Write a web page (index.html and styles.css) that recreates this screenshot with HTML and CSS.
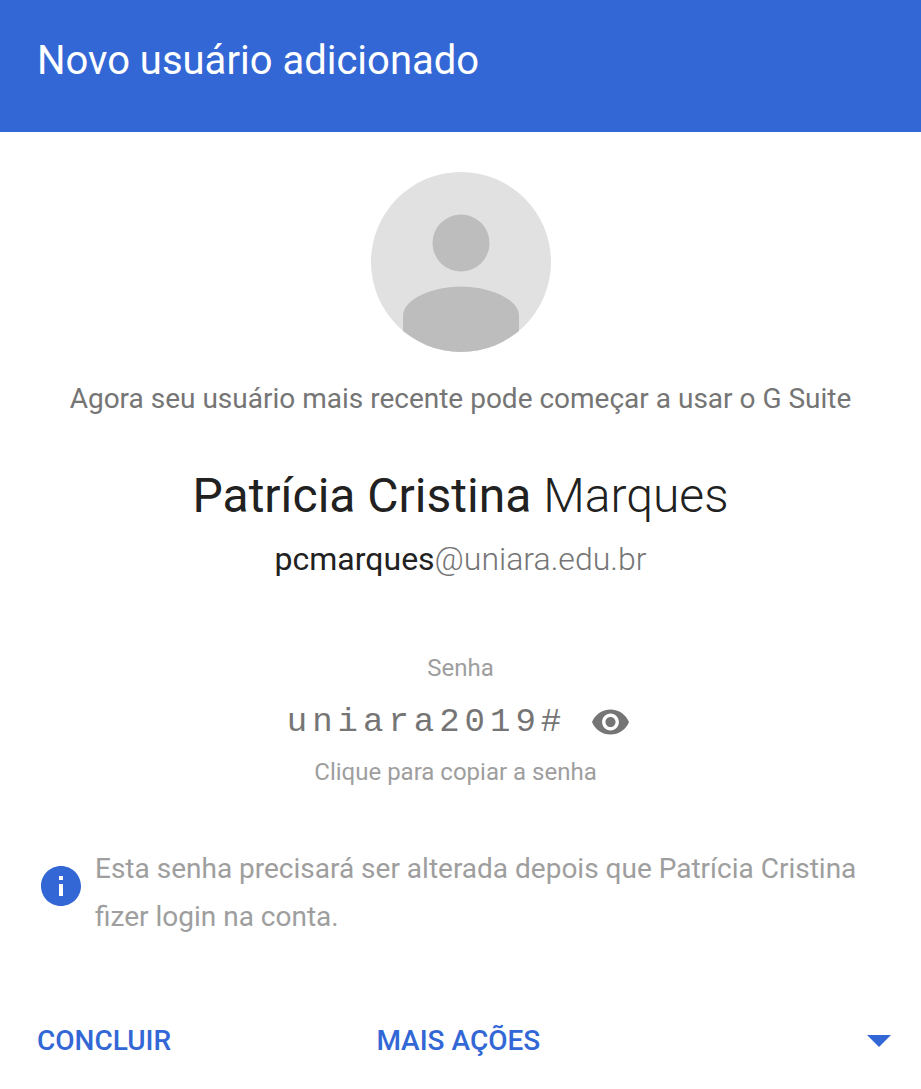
FILE: index.html
```html
<!DOCTYPE html>
<html lang="pt-BR">
<head>
<meta charset="utf-8">
<meta name="viewport" content="width=device-width, initial-scale=1">
<title>Novo usuário adicionado</title>
<link rel="stylesheet" href="styles.css">
</head>
<body>
<header class="header"><h1 class="title">Novo usuário adicionado</h1></header>
<main class="content">
  <svg class="avatar" viewBox="0 0 180 180" role="img" aria-label="Foto do perfil">
    <defs><clipPath id="circle"><circle cx="90" cy="90" r="90"/></clipPath></defs>
    <circle cx="90" cy="90" r="90" fill="#e1e1e1"/>
    <g clip-path="url(#circle)" fill="#bdbdbd">
      <circle cx="90" cy="71" r="28.500"/>
      <path d="M32 180V144C32 126 64 114.500 90 114.500S148 126 148 144V180Z"/>
    </g>
  </svg>
  <p class="intro">Agora seu usuário mais recente pode começar a usar o G Suite</p>
  <h2 class="name">Patrícia Cristina <span class="light">Marques</span></h2>
  <p class="email">pcmarques<span class="domain">@uniara.edu.br</span></p>
  <section class="password">
    <p class="caption">Senha</p>
    <div class="secret">
      <span class="value">uniara2019#</span>
      <button class="eye" type="button" aria-label="Ocultar senha">
        <svg class="eye-icon" viewBox="1 4.500 22 15"><path fill="#757575" d="M12 4.500C7 4.500 2.730 7.610 1 12c1.730 4.390 6 7.500 11 7.500s9.270-3.110 11-7.500c-1.730-4.390-6-7.500-11-7.500zM12 17c-2.760 0-5-2.240-5-5s2.240-5 5-5 5 2.240 5 5-2.240 5-5 5zm0-8c-1.660 0-3 1.340-3 3s1.340 3 3 3 3-1.340 3-3-1.340-3-3-3z"/></svg>
      </button>
    </div>
    <button class="copy" type="button">Clique para copiar a senha</button>
  </section>
  <div class="notice">
    <svg class="info" viewBox="2 2 20 20" aria-hidden="true"><path fill="#3367d6" d="M12 2C6.480 2 2 6.480 2 12s4.480 10 10 10 10-4.480 10-10S17.520 2 12 2zm1 15h-2v-6h2v6zm0-8h-2V7h2v2z"/></svg>
    <p class="notice-text">Esta senha precisará ser alterada depois que Patrícia Cristina fizer login na conta.</p>
  </div>
</main>
<footer class="actions">
  <button class="action" type="button">CONCLUIR</button>
  <button class="action more" type="button"><span>MAIS AÇÕES</span><svg class="arrow" viewBox="0 0 24 12" aria-hidden="true"><path fill="#3367d6" d="M0 0h24L12 12z"/></svg></button>
</footer>
</body>
</html>
```
FILE: styles.css
```css
* {
  box-sizing: border-box;
}

body {
  margin: 0;
  background: #fff;
  font-family: Roboto, sans-serif;
  color: #212121;
}

h1, h2, p {
  margin: 0;
  font-weight: 400;
}

button {
  padding: 0;
  border: 0;
  background: none;
  font: inherit;
  cursor: pointer;
}

.header {
  padding: 37px 37px 47px;
  background: #3367d6;
  color: #fff;
}

.title {
  font-size: 40px;
  line-height: 48px;
}

.content {
  display: flex;
  flex-direction: column;
  align-items: center;
  padding: 40px 38px 0;
}

.avatar {
  width: 180px;
  height: 180px;
}

.intro {
  margin-top: 31px;
  color: #757575;
  font-size: 28px;
  line-height: 32px;
}

.name {
  margin-top: 53px;
  font-size: 48px;
  line-height: 56px;
}

.light {
  font-weight: 300;
}

.email {
  margin-top: 15px;
  font-size: 32px;
  line-height: 40px;
}

.domain {
  color: #757575;
  font-weight: 300;
}

.password {
  display: flex;
  flex-direction: column;
  align-items: center;
  margin-top: 73px;
}

.caption, .copy {
  color: #9e9e9e;
  font-size: 24px;
  line-height: 32px;
}

.copy {
  padding-right: 10px;
}

.secret {
  display: flex;
  align-items: center;
  gap: 26px;
  height: 40px;
  margin: 18px 0 14px;
  padding-right: 5px;
}

.value {
  color: #757575;
  font-family: "Liberation Mono", monospace;
  font-size: 34px;
  letter-spacing: 5px;
}

.eye, .eye-icon {
  display: block;
  width: 37px;
  height: 26px;
}

.notice {
  display: flex;
  align-items: flex-start;
  gap: 14px;
  width: 100%;
  margin-top: 57px;
  padding-left: 3px;
  color: #9e9e9e;
}

.info {
  flex: none;
  width: 40px;
  height: 40px;
  margin-top: 21px;
}

.notice-text {
  font-size: 28px;
  line-height: 48px;
}

.actions {
  display: grid;
  grid-template-columns: 38fr 62fr;
  gap: 24px;
  padding: 84px 30px 32px 37px;
}

.action {
  color: #3367d6;
  font-size: 28px;
  font-weight: 500;
  line-height: 32px;
  text-align: left;
}

.more {
  display: flex;
  align-items: center;
  justify-content: space-between;
}

.arrow {
  width: 24px;
  height: 12px;
}
```
